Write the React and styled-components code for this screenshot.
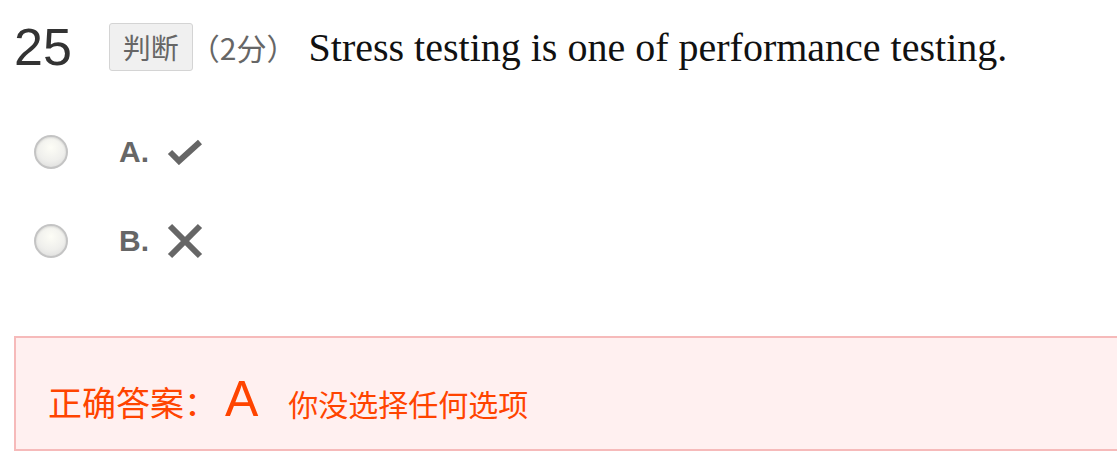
import styled, { createGlobalStyle } from "styled-components";

const GlobalStyle = createGlobalStyle`
    body {
        margin: 0;
        background: #fff;
        overflow: hidden;
        font-family: "Liberation Sans", "Noto Sans CJK SC", sans-serif;
    }
`;

const QuestionContainer = styled.section`
    width: 1117px;
    height: 471px;
    overflow: hidden;
`;

const Header = styled.div`
    display: flex;
    align-items: center;
    height: 60px;
    margin-top: 17px;
    padding-left: 14px;
`;

const Number = styled.span`
    font-family: "Liberation Sans", Arial, sans-serif;
    font-size: 52px;
    color: #333;
    line-height: 1;
    margin-right: 37px;
`;

const Tag = styled.span`
    display: inline-flex;
    align-items: center;
    height: 48px;
    box-sizing: border-box;
    padding: 0 13px;
    background: #f0f0f0;
    border: 1px solid #d4d4d4;
    border-radius: 3px;
    font-family: "Noto Sans CJK SC", sans-serif;
    font-size: 28px;
    color: #666;
`;

const Score = styled.span`
    font-family: "Noto Sans CJK SC", sans-serif;
    font-size: 30px;
    color: #666;
    margin-left: -3px;
    margin-right: 12px;
`;

const Stem = styled.span`
    font-family: "Liberation Serif", "Times New Roman", serif;
    font-size: 40px;
    color: #111;
`;

const Options = styled.div`
    margin-top: 30px;
`;

const OptionRow = styled.div`
    display: flex;
    align-items: center;
    height: 89px;
    padding-left: 34px;
`;

const Radio = styled.span`
    width: 34px;
    height: 34px;
    box-sizing: border-box;
    border-radius: 50%;
    border: 2px solid #c4c4c4;
    background: radial-gradient(circle at 50% 35%, #fdfdf6 0%, #efefec 55%, #d8d8d8 100%);
    box-shadow: inset 0 1px 2px rgba(0, 0, 0, 0.1);
    margin-right: 51px;
`;

const OptionLabel = styled.span`
    font-family: "Liberation Sans", Arial, sans-serif;
    font-weight: bold;
    font-size: 30px;
    color: #666;
    margin-right: 18px;
`;

const Icon = styled.svg`
    display: block;
`;

const AnswerBox = styled.div`
    display: flex;
    align-items: baseline;
    box-sizing: border-box;
    width: 1130px;
    height: 115px;
    margin-top: 51px;
    margin-left: 14px;
    padding: 36px 0 0 32px;
    background: #fff0f0;
    border: 2px solid #f6baba;
    color: #ff4400;
    font-family: "Noto Sans CJK SC", sans-serif;
`;

const AnswerLabel = styled.span`
    font-size: 34px;
    margin-right: 7px;
`;

const AnswerLetter = styled.span`
    font-family: "Liberation Sans", Arial, sans-serif;
    font-size: 50px;
    line-height: 1;
    margin-right: 30px;
`;

const AnswerNote = styled.span`
    font-size: 30px;
`;

const CheckIcon = () => (
    <Icon width="36" height="26" viewBox="0 0 36 26">
        <path d="M3 13 L12 22 L33 3" fill="none" stroke="#666" strokeWidth="6" strokeLinejoin="miter" />
    </Icon>
);

const CrossIcon = () => (
    <Icon width="36" height="36" viewBox="0 0 36 36">
        <path d="M3 3 L33 33 M33 3 L3 33" fill="none" stroke="#666" strokeWidth="6" />
    </Icon>
);

export default function App() {
    return (
        <QuestionContainer>
            <GlobalStyle />
            <Header>
                <Number>25</Number>
                <Tag>判断</Tag>
                <Score>（2分）</Score>
                <Stem>Stress testing is one of performance testing.</Stem>
            </Header>
            <Options>
                <OptionRow>
                    <Radio />
                    <OptionLabel>A.</OptionLabel>
                    <CheckIcon />
                </OptionRow>
                <OptionRow>
                    <Radio />
                    <OptionLabel>B.</OptionLabel>
                    <CrossIcon />
                </OptionRow>
            </Options>
            <AnswerBox>
                <AnswerLabel>正确答案：</AnswerLabel>
                <AnswerLetter>A</AnswerLetter>
                <AnswerNote>你没选择任何选项</AnswerNote>
            </AnswerBox>
        </QuestionContainer>
    );
}
